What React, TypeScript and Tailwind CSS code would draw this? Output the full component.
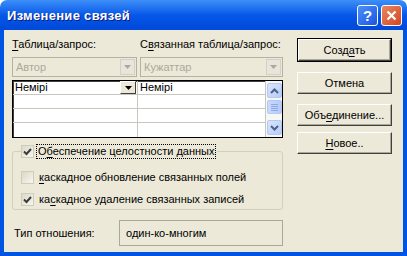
import React from 'react';

const font = { fontFamily: '"Liberation Sans", Arial, sans-serif' };

function U({ children }: { children: React.ReactNode }) {
  return <span className="underline underline-offset-[2px]">{children}</span>;
}

function DisabledCombo({ text, w }: { text: string; w: string }) {
  return (
    <div className={`${w} h-[20px] flex items-center border border-[#b5b2a4] bg-[#ece9d8]`}>
      <span className="flex-1 pl-[3px] text-[#aca899]">{text}</span>
      <div className="w-[15px] h-[16px] mr-[1px] flex items-center justify-center bg-[#e8e6dc] border border-[#d4d0c4]">
        <svg width="7" height="4" viewBox="0 0 7 4"><path d="M0 0h7L3.5 4z" fill="#aca899" /></svg>
      </div>
    </div>
  );
}

function ScrollBtn({ dir }: { dir: 'up' | 'down' }) {
  return (
    <div className="w-[15px] h-[15px] mx-auto rounded-[2px] border border-[#b3c8f5] bg-gradient-to-br from-[#dbe6fd] to-[#b4cbfa] flex items-center justify-center">
      <svg width="9" height="6" viewBox="0 0 9 6">
        <path d={dir === 'up' ? 'M1 5L4.5 1.5L8 5' : 'M1 1L4.5 4.5L8 1'} stroke="#4d6185" strokeWidth="2" fill="none" />
      </svg>
    </div>
  );
}

function Btn({ children, def }: { children: React.ReactNode; def?: boolean }) {
  return (
    <div className={`w-[95px] ${def ? 'h-[24px] border border-black' : 'h-[22px]'} flex`}>
      <div className="flex-1 flex items-center justify-center border-t border-l border-white border-r border-b border-r-[#404040] border-b-[#404040] bg-[#ece9d8] shadow-[inset_-1px_-1px_0_#aca899]">
        <span className="text-black">{children}</span>
      </div>
    </div>
  );
}

function Check({ checked }: { checked?: boolean }) {
  return (
    <div className="w-[13px] h-[13px] bg-gradient-to-br from-[#dcd9c6] to-[#f7f6f0] border border-[#cfccbb] flex items-center justify-center shrink-0">
      {checked && (
        <svg width="9" height="8" viewBox="0 0 9 8">
          <path d="M1 3.5L3.5 6L8 1" stroke="#3b3b3b" strokeWidth="2" fill="none" />
        </svg>
      )}
    </div>
  );
}

export default function App() {
  return (
    <div className="w-[407px] h-[256px] flex flex-col text-[11px] leading-[13px] text-black select-none" style={font}>
      {/* title bar */}
      <div className="h-[30px] rounded-t-[7px] bg-gradient-to-b from-[#3d8ff8] via-[#0757e8] to-[#0048d8] flex items-center pl-[7px] pr-[5px] shrink-0">
        <span className="text-white font-bold text-[13px] tracking-[0.3px] [text-shadow:1px_1px_0_#0a1d80]">Изменение связей</span>
        <div className="ml-auto flex gap-[3px]">
          <div className="w-[21px] h-[21px] rounded-[3px] border border-white bg-gradient-to-br from-[#4d8ff9] to-[#1a55e0] flex items-center justify-center text-white font-bold text-[15px] leading-none">?</div>
          <div className="w-[21px] h-[21px] rounded-[3px] border border-white bg-gradient-to-br from-[#e9865f] to-[#d3431c] flex items-center justify-center">
            <svg width="11" height="11" viewBox="0 0 11 11"><path d="M1.5 1.5L9.5 9.5M9.5 1.5L1.5 9.5" stroke="white" strokeWidth="2.2" /></svg>
          </div>
        </div>
      </div>
      {/* body */}
      <div className="flex-1 flex bg-[#0054e3] px-[4px] pb-[4px]">
        <div className="flex-1 bg-[#ece9d8] flex pl-[8px]">
          {/* left column */}
          <div className="w-[271px] flex flex-col">
            <div className="flex mt-[8px] h-[13px]">
              <span className="w-[128px]"><U>Т</U>аблица/запрос:</span>
              <span>С<U>в</U>язанная таблица/запрос:</span>
            </div>
            <div className="flex gap-[3px] mt-[6px]">
              <DisabledCombo text="Автор" w="w-[125px]" />
              <DisabledCombo text="Кужаттар" w="w-[143px]" />
            </div>
            {/* grid */}
            <div className="mt-[3px] h-[58px] border border-black shadow-[inset_1px_1px_0_#404040] flex bg-white">
              <div className="flex-1 flex flex-col">
                {[0, 1, 2, 3].map((r) => (
                  <div key={r} className="h-[14px] flex border-b border-[#c8c6bd] last:border-b-0">
                    <div className="w-[125px] border-r border-[#c8c6bd] flex items-center">
                      {r === 0 && (
                        <>
                          <span className="flex-1 pl-[2px]">Немірі</span>
                          <div className="w-[16px] h-[13px] bg-[#ece9d8] border-t border-l border-white border-r border-b border-r-[#404040] border-b-[#404040] flex items-center justify-center mr-[1px]">
                            <svg width="7" height="4" viewBox="0 0 7 4"><path d="M0 0h7L3.5 4z" fill="black" /></svg>
                          </div>
                        </>
                      )}
                    </div>
                    <div className="flex-1 flex items-center pl-[2px]">{r === 0 && 'Немірі'}</div>
                  </div>
                ))}
              </div>
              <div className="w-[17px] bg-[#f7f7f4] border-l border-[#c8c6bd] flex flex-col py-[2px]">
                <ScrollBtn dir="up" />
                <div className="w-[15px] h-[14px] mx-auto mt-[2px] rounded-[2px] border border-[#b3c8f5] bg-gradient-to-r from-[#c9dafd] to-[#b6cbfa] flex flex-col items-center justify-center gap-[1px]">
                  {[0, 1, 2, 3].map((i) => <div key={i} className="w-[7px] h-[1px] bg-[#8fa8e6]" />)}
                </div>
                <div className="flex-1" />
                <ScrollBtn dir="down" />
              </div>
            </div>
            {/* group box */}
            <div className="relative mt-[13px] h-[59px] border border-[#d0d0bf] rounded-[3px]">
              <div className="absolute -top-[7px] left-[8px] flex items-center bg-[#ece9d8] pr-[2px]">
                <Check checked />
                <span className="ml-[3px] px-[1px] outline outline-1 outline-dotted outline-black">О<U>б</U>еспечение целостности данных</span>
              </div>
              <div className="flex flex-col pl-[8px] pt-[19px] gap-[9px]">
                <div className="flex items-center">
                  <Check />
                  <span className="ml-[5px]"><U>к</U>аскадное обновление связанных полей</span>
                </div>
                <div className="flex items-center">
                  <Check checked />
                  <span className="ml-[5px]">ка<U>с</U>кадное удаление связанных записей</span>
                </div>
              </div>
            </div>
            {/* relation type */}
            <div className="flex items-center mt-[10px]">
              <span className="w-[107px] pl-[2px]">Тип отношения:</span>
              <div className="w-[164px] h-[26px] border border-[#aca899] flex items-center pl-[6px]">один-ко-многим</div>
            </div>
          </div>
          {/* right column */}
          <div className="flex flex-col ml-[14px] pt-[8px]">
            <Btn def>Созд<U>а</U>ть</Btn>
            <div className="mt-[10px]"><Btn>Отмена</Btn></div>
            <div className="mt-[10px]"><Btn>Объ<U>е</U>динение...</Btn></div>
            <div className="mt-[6px]"><Btn><U>Н</U>овое..</Btn></div>
          </div>
        </div>
      </div>
    </div>
  );
}
